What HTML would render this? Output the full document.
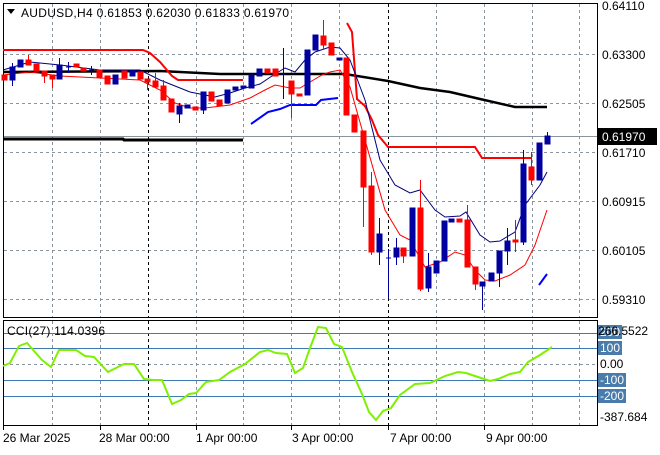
<!DOCTYPE html>
<html><head><meta charset="utf-8"><style>
body{margin:0;background:#fff;width:660px;height:450px;overflow:hidden;font-family:"Liberation Sans",sans-serif}
</style></head><body>
<svg width="660" height="450" xmlns="http://www.w3.org/2000/svg" font-family="Liberation Sans, sans-serif" font-size="12">
<rect width="660" height="450" fill="#fff"/>
<g stroke="#8a949e" stroke-dasharray="3,3" stroke-width="1">
<line x1="52.5" y1="4" x2="52.5" y2="317"/><line x1="100.5" y1="4" x2="100.5" y2="317"/><line x1="196.5" y1="4" x2="196.5" y2="317"/><line x1="243.5" y1="4" x2="243.5" y2="317"/><line x1="291.5" y1="4" x2="291.5" y2="317"/><line x1="339.5" y1="4" x2="339.5" y2="317"/><line x1="436.5" y1="4" x2="436.5" y2="317"/><line x1="484.5" y1="4" x2="484.5" y2="317"/><line x1="532.5" y1="4" x2="532.5" y2="317"/><line x1="579.5" y1="4" x2="579.5" y2="317"/>
<line x1="4" y1="54.5" x2="597" y2="54.5"/><line x1="4" y1="103.5" x2="597" y2="103.5"/><line x1="4" y1="152.5" x2="597" y2="152.5"/><line x1="4" y1="201.5" x2="597" y2="201.5"/><line x1="4" y1="250.5" x2="597" y2="250.5"/><line x1="4" y1="299.5" x2="597" y2="299.5"/>
<line x1="52.5" y1="321" x2="52.5" y2="425"/><line x1="100.5" y1="321" x2="100.5" y2="425"/><line x1="196.5" y1="321" x2="196.5" y2="425"/><line x1="243.5" y1="321" x2="243.5" y2="425"/><line x1="291.5" y1="321" x2="291.5" y2="425"/><line x1="339.5" y1="321" x2="339.5" y2="425"/><line x1="436.5" y1="321" x2="436.5" y2="425"/><line x1="484.5" y1="321" x2="484.5" y2="425"/><line x1="532.5" y1="321" x2="532.5" y2="425"/><line x1="579.5" y1="321" x2="579.5" y2="425"/>
<line x1="4" y1="364.5" x2="597" y2="364.5"/>
</g>
<g stroke="#000" stroke-dasharray="3,3"><line x1="148.5" y1="4" x2="148.5" y2="317"/><line x1="388.5" y1="4" x2="388.5" y2="317"/><line x1="148.5" y1="321" x2="148.5" y2="425"/><line x1="388.5" y1="321" x2="388.5" y2="425"/></g>
<line x1="4" y1="136.5" x2="597" y2="136.5" stroke="#8a949e"/>
<g stroke="#3f7ab5"><line x1="4" y1="333.5" x2="597" y2="333.5"/><line x1="4" y1="348.5" x2="597" y2="348.5"/><line x1="4" y1="380.5" x2="597" y2="380.5"/><line x1="4" y1="396.5" x2="597" y2="396.5"/></g>
<rect x="3.5" y="3.5" width="594" height="314" fill="none" stroke="#000"/>
<rect x="3.5" y="320.5" width="594" height="105" fill="none" stroke="#000"/>
<polyline fill="none" stroke="#000" stroke-width="2.5" points="3,72 160,71 220,74 345,74 388,81 420,88 450,92 480,99 515,107 547,107"/>
<polyline fill="none" stroke="#f00" stroke-width="2" points="3,50 143,50 150,53 160,62 172,76 178,80 243,80"/>
<polyline fill="none" stroke="#f00" stroke-width="2" points="347,23 352,32 357,99 365,106 372,120 378,135 388,147 475,147 482,158 531,158"/>
<polyline fill="none" stroke="#000" stroke-width="3" points="3,139 123,139 124,140 243,140"/>
<polyline fill="none" stroke="#0000ff" stroke-width="2" points="251,124 268,112 280,109 290,105 316,105 321,100 338,98"/>
<line x1="539" y1="285" x2="547" y2="274" stroke="#00f" stroke-width="2"/>
<polyline fill="none" stroke="#000080" points="3,70 30,62 60,65 100,70 140,70 160,80 190,92 205,95 215,97 230,93 245,88 260,84 275,74 285,68 295,72 305,60 315,52 330,47 340,48 350,60 365,100 380,160 395,185 410,193 420,190 435,210 445,217 460,216 466,212 480,235 490,242 500,241 515,232 525,205 540,185 547,172"/>
<polyline fill="none" stroke="#f00" points="3,75 30,72 60,76 100,78 140,80 160,90 175,103 190,108 205,108 230,105 250,98 265,90 275,85 290,88 300,88 310,82 322,75 330,72 340,70 350,87 365,140 385,210 400,235 410,240 425,267 440,262 455,252 465,255 475,270 485,280 495,281 510,275 525,265 535,245 547,210"/>
<g>
<g fill="#f00" stroke="#f00">
<rect x="2" y="75" width="5" height="5"/><rect x="26" y="60" width="5" height="5"/><line x1="28.5" y1="55" x2="28.5" y2="60"/><rect x="34" y="64" width="5" height="7"/><rect x="42" y="71" width="5" height="5"/><line x1="44.5" y1="76" x2="44.5" y2="83"/><rect x="50" y="75" width="5" height="4"/><line x1="52.5" y1="79" x2="52.5" y2="88"/><rect x="74" y="64" width="5" height="3"/><rect x="81" y="68" width="5" height="3"/><rect x="97" y="70" width="5" height="7"/><rect x="105" y="76" width="5" height="8"/><rect x="122" y="71" width="5" height="7"/><rect x="138" y="72" width="5" height="7"/><rect x="145" y="79" width="5" height="3"/><line x1="147.5" y1="82" x2="147.5" y2="90"/><rect x="153" y="81" width="5" height="6"/><line x1="155.5" y1="73" x2="155.5" y2="81"/><rect x="161" y="86" width="5" height="14"/><line x1="163.5" y1="80" x2="163.5" y2="86"/><rect x="169" y="99" width="5" height="13"/><rect x="193" y="107" width="5" height="3"/><rect x="209" y="92" width="5" height="9"/><rect x="217" y="100" width="5" height="6"/><rect x="265" y="69" width="5" height="4"/><rect x="273" y="69" width="5" height="7"/><rect x="289" y="81" width="5" height="13"/><line x1="291.5" y1="94" x2="291.5" y2="118"/><rect x="297" y="94" width="5" height="2"/><rect x="321" y="36" width="5" height="9"/><line x1="323.5" y1="20" x2="323.5" y2="50"/><rect x="329" y="43" width="5" height="12"/>
<rect x="344" y="58" width="5" height="57"/><rect x="352" y="115" width="5" height="17"/><rect x="361" y="131" width="5" height="56"/><line x1="363.5" y1="187" x2="363.5" y2="227"/><rect x="369" y="186" width="5" height="66"/><line x1="371.5" y1="172" x2="371.5" y2="255"/><rect x="401" y="248" width="5" height="8"/><line x1="403.5" y1="256" x2="403.5" y2="263"/><rect x="418" y="208" width="5" height="81"/><line x1="420.5" y1="180" x2="420.5" y2="291"/><rect x="457" y="219" width="5" height="3"/><rect x="465" y="220" width="5" height="47"/><line x1="467.5" y1="205" x2="467.5" y2="267"/><rect x="473" y="267" width="5" height="17"/><line x1="475.5" y1="284" x2="475.5" y2="290"/><rect x="513" y="240" width="5" height="2"/><line x1="515.5" y1="220" x2="515.5" y2="252"/><rect x="529" y="167" width="5" height="13"/><line x1="531.5" y1="152" x2="531.5" y2="185"/>
</g>
<g fill="#0000a0" stroke="#0000a0">
<rect x="10" y="67" width="5" height="13"/><line x1="12.5" y1="63" x2="12.5" y2="86"/><rect x="18" y="60" width="5" height="7"/><rect x="57" y="65" width="5" height="14"/><line x1="59.5" y1="58" x2="59.5" y2="65"/><line x1="66" y1="67" x2="71" y2="67"/><line x1="68.5" y1="62" x2="68.5" y2="73"/><line x1="89" y1="70" x2="94" y2="70"/><line x1="91.5" y1="66" x2="91.5" y2="75"/><rect x="113" y="75" width="5" height="9"/><rect x="130" y="71" width="5" height="5"/><rect x="177" y="106" width="5" height="8"/><line x1="179.5" y1="103" x2="179.5" y2="123"/><rect x="185" y="105" width="5" height="3"/><rect x="201" y="92" width="5" height="18"/><line x1="203.5" y1="110" x2="203.5" y2="114"/><rect x="225" y="90" width="5" height="13"/><rect x="233" y="87" width="5" height="3"/><rect x="241" y="86" width="5" height="2"/><rect x="249" y="75" width="5" height="13"/><rect x="257" y="69" width="5" height="7"/><line x1="281" y1="74" x2="286" y2="74"/><line x1="283.5" y1="48" x2="283.5" y2="99"/><rect x="305" y="50" width="5" height="45"/><rect x="313" y="35" width="5" height="15"/><rect x="337" y="58" width="5" height="2"/>
<rect x="377" y="234" width="5" height="18"/><line x1="379.5" y1="218" x2="379.5" y2="265"/><line x1="386" y1="258" x2="391" y2="258"/><line x1="388.5" y1="249" x2="388.5" y2="298"/><rect x="394" y="248" width="5" height="9"/><line x1="396.5" y1="238" x2="396.5" y2="265"/><rect x="410" y="208" width="5" height="48"/><rect x="426" y="267" width="5" height="21"/><line x1="428.5" y1="253" x2="428.5" y2="292"/><rect x="434" y="261" width="5" height="12"/><rect x="442" y="221" width="5" height="40"/><rect x="449" y="219" width="5" height="3"/><rect x="480" y="282" width="5" height="4"/><line x1="482.5" y1="286" x2="482.5" y2="310"/><rect x="489" y="273" width="5" height="8"/><rect x="497" y="251" width="5" height="22"/><line x1="499.5" y1="251" x2="499.5" y2="287"/><rect x="505" y="241" width="5" height="10"/><line x1="507.5" y1="228" x2="507.5" y2="265"/><rect x="521" y="164" width="5" height="78"/><line x1="523.5" y1="150" x2="523.5" y2="245"/><rect x="537" y="143" width="5" height="37"/><rect x="545" y="136" width="5" height="8"/><line x1="547.5" y1="132" x2="547.5" y2="136"/>
</g>
</g>
<polyline fill="none" stroke="#7ff000" stroke-width="2" points="3,366 10,363 19,346 27,343 42,360 51,367 59,350 76,350 85,356 94,357 108,372 124,364 134,364 144,379 153,380 162,380 172,404 181,400 189,394 196,393 206,382 219,380 230,372 245,364 260,352 268,350 276,353 287,354 295,373 303,368 310,348 318,327 326,328 334,344 342,347 352,372 362,394 369,412 376,420 383,411 391,408 400,395 415,384 430,383 445,376 458,372 466,373 478,377 490,381 498,379 510,374 520,372 528,362 540,355 552,347"/>
<g font-size="12" fill="#000">
<text x="602" y="10">0.64110</text><text x="602" y="59">0.63300</text><text x="602" y="108">0.62505</text><text x="602" y="157">0.61710</text><text x="602" y="206">0.60915</text><text x="602" y="255">0.60105</text><text x="602" y="304">0.59310</text>
</g>
<rect x="598" y="128" width="59" height="17" fill="#000"/><text x="602" y="141" fill="#fff">0.61970</text>
<g fill="#4a7cab"><rect x="598" y="325" width="24" height="14"/><rect x="598" y="341" width="24" height="14"/><rect x="598" y="373" width="28" height="14"/><rect x="598" y="389" width="28" height="14"/></g>
<g font-size="12"><text x="600" y="336" fill="#fff">200</text><text x="598" y="335" fill="#000">266.5522</text><text x="600" y="352" fill="#fff">100</text><text x="600" y="368">0.00</text><text x="600" y="384" fill="#fff">-100</text><text x="600" y="400" fill="#fff">-200</text><text x="600" y="421">-387.684</text></g>
<g stroke="#000"><line x1="3.5" y1="426" x2="3.5" y2="430"/><line x1="100.5" y1="426" x2="100.5" y2="430"/><line x1="196.5" y1="426" x2="196.5" y2="430"/><line x1="291.5" y1="426" x2="291.5" y2="430"/><line x1="388.5" y1="426" x2="388.5" y2="430"/><line x1="484.5" y1="426" x2="484.5" y2="430"/></g>
<g font-size="12"><text x="3" y="442">26 Mar 2025</text><text x="99" y="442">28 Mar 00:00</text><text x="196" y="442">1 Apr 00:00</text><text x="292" y="442">3 Apr 00:00</text><text x="390" y="442">7 Apr 00:00</text><text x="486" y="442">9 Apr 00:00</text></g>
<path d="M7,9 L15,9 L11,14 Z" fill="#000"/>
<text x="21" y="17" font-size="12" textLength="268" lengthAdjust="spacing">AUDUSD,H4  0.61853 0.62030 0.61833 0.61970</text>
<text x="7" y="335" font-size="12" textLength="98" lengthAdjust="spacing">CCI(27) 114.0396</text>
</svg>
</body></html>
